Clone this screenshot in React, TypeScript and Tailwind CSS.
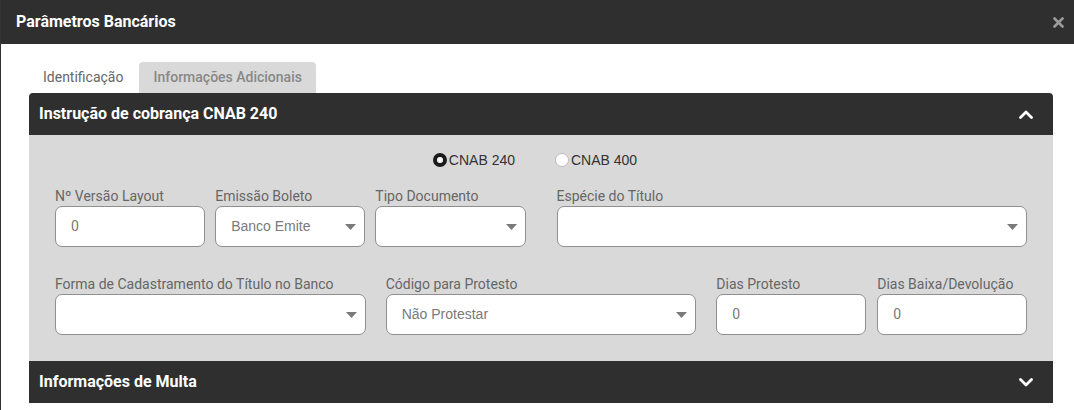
import React from "react";

const Caret = () => (
  <svg width="11" height="6" viewBox="0 0 11 6" className="absolute right-[8px] top-1/2 -translate-y-1/2">
    <path d="M0 0 H11 L5.5 6 Z" fill="#7a7a7a" />
  </svg>
);

const Field = ({ label, value, select }: { label: string; value?: string; select?: boolean }) => (
  <div className="flex-1 min-w-0 flex flex-col">
    <div className="h-[20px] leading-[20px] text-[14px] text-[#666] font-['Roboto',sans-serif] whitespace-nowrap">{label}</div>
    <div className="relative h-[41px] bg-white border border-[#8f8f8f] rounded-[7px] flex items-center pl-[15px]">
      <span className={`text-[14px] text-[#7a7a7a] ${select ? "font-['Liberation_Sans',Arial,sans-serif]" : "font-['Roboto',sans-serif]"}`}>{value}</span>
      {select && <Caret />}
    </div>
  </div>
);

const Chevron = ({ up }: { up?: boolean }) => (
  <svg width="14" height="9" viewBox="0 0 14 9">
    <path d={up ? "M1.5 7.5 L7 2 L12.5 7.5" : "M1.5 1.5 L7 7 L12.5 1.5"} fill="none" stroke="#fff" strokeWidth="2.8" strokeLinecap="round" strokeLinejoin="round" />
  </svg>
);

export default function App() {
  return (
    <div className="w-[1074px] h-[410px] bg-white border-l border-[#333] font-['Roboto',sans-serif] overflow-hidden">
      <div className="h-[44px] bg-[#2f2f2f] flex items-center justify-between pl-[15px] pr-[10px]">
        <span className="text-white font-bold text-[16px]">Parâmetros Bancários</span>
        <svg width="11" height="11" viewBox="0 0 11 11">
          <path d="M1.5 1.5 L9.5 9.5 M9.5 1.5 L1.5 9.5" stroke="#9a9a9a" strokeWidth="2.6" strokeLinecap="round" />
        </svg>
      </div>
      <div className="pt-[18px] pl-[28px] pr-[21px]">
        <div className="flex h-[31px]">
          <div className="pl-[14px] pr-[16px] flex items-center text-[14px] text-[#666]">Identificação</div>
          <div className="px-[14px] flex items-center text-[14px] text-[#888] font-medium bg-[#d9d9d9] rounded-t-[4px]">Informações Adicionais</div>
        </div>
        <div className="h-[42px] bg-[#2f2f2f] rounded-t-[4px] flex items-center justify-between pl-[10px] pr-[20px]">
          <span className="text-white font-bold text-[16px]">Instrução de cobrança CNAB 240</span>
          <Chevron up />
        </div>
        <div className="bg-[#d9d9d9] px-[26px] pt-[15px] pb-[26px]">
          <div className="flex justify-center gap-[40px] h-[20px] items-center pr-[12px] font-['Liberation_Sans',Arial,sans-serif] text-[14px] text-[#333]">
            <label className="flex items-center gap-[2px]">
              <span className="w-[14px] h-[14px] rounded-full border-[4px] border-[#1c1c1c] bg-white inline-block" />
              CNAB 240
            </label>
            <label className="flex items-center gap-[2px]">
              <span className="w-[14px] h-[14px] rounded-full border border-[#bbb] bg-white inline-block" />
              CNAB 400
            </label>
          </div>
          <div className="mt-[16px] flex gap-[31px]">
            <div className="flex-1 flex gap-[10px]">
              <Field label="Nº Versão Layout" value="0" />
              <Field label="Emissão Boleto" value="Banco Emite" select />
              <Field label="Tipo Documento" select />
            </div>
            <div className="flex-1 flex">
              <Field label="Espécie do Título" select />
            </div>
          </div>
          <div className="mt-[27px] flex gap-[20px]">
            <Field label="Forma de Cadastramento do Título no Banco" select />
            <Field label="Código para Protesto" value="Não Protestar" select />
            <div className="flex-1 flex gap-[11px]">
              <Field label="Dias Protesto" value="0" />
              <Field label="Dias Baixa/Devolução" value="0" />
            </div>
          </div>
        </div>
        <div className="h-[42px] bg-[#2f2f2f] flex items-center justify-between pl-[10px] pr-[20px]">
          <span className="text-white font-bold text-[16px]">Informações de Multa</span>
          <Chevron />
        </div>
      </div>
    </div>
  );
}
